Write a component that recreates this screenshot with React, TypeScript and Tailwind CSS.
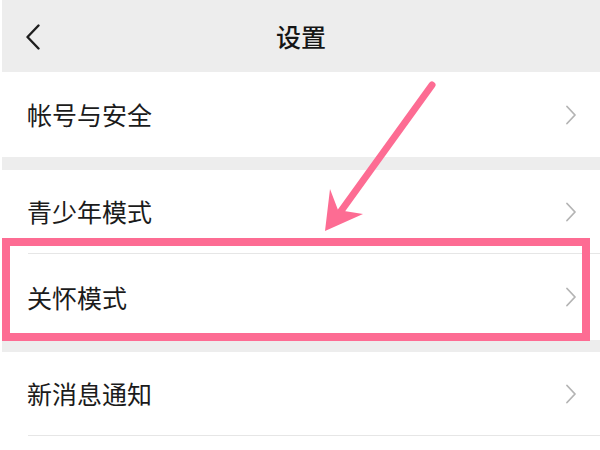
import React from "react";

const font = { fontFamily: '"Noto Sans CJK SC", "Noto Sans", sans-serif' };

function Chevron() {
  return (
    <svg width="12" height="20" viewBox="0 0 12 20" className="shrink-0">
      <path d="M2 1.5 L10 10 L2 18.5" fill="none" stroke="#b4b4b4" strokeWidth="1.8" strokeLinecap="round" strokeLinejoin="round" />
    </svg>
  );
}

function Row({ label, h }: { label: string; h: string }) {
  return (
    <div className={`flex items-center justify-between bg-white pl-[25px] pr-[23px] ${h}`}>
      <span className="text-[25px] leading-none text-[#1b1b1b]">{label}</span>
      <Chevron />
    </div>
  );
}

export default function App() {
  return (
    <div className="relative w-[600px] h-[450px] overflow-hidden bg-white pl-[2px]" style={font}>
      <div className="relative flex h-[72px] items-center justify-center bg-[#ededed]">
        <svg width="16" height="26" viewBox="0 0 16 26" className="absolute left-[23px] top-[24px]">
          <path d="M13.5 1.5 L2.5 13 L13.5 24.5" fill="none" stroke="#1e1e1e" strokeWidth="2.4" strokeLinecap="round" strokeLinejoin="round" />
        </svg>
        <span className="text-[25px] font-medium leading-none text-[#151515]">设置</span>
      </div>
      <Row label="帐号与安全" h="h-[85px]" />
      <div className="h-[13px] bg-[#ededed]" />
      <Row label="青少年模式" h="h-[83px]" />
      <div className="ml-[26px] h-px bg-[#e6e6e6]" />
      <Row label="关怀模式" h="h-[86px]" />
      <div className="h-[12px] bg-[#ededed]" />
      <Row label="新消息通知" h="h-[83px]" />
      <div className="ml-[26px] h-px bg-[#e6e6e6]" />

      <div className="absolute left-[2px] top-[238px] h-[103px] w-[588px] border-[8px] border-[#fd6c93]" />
      <svg width="600" height="450" viewBox="0 0 600 450" className="absolute left-0 top-0 pointer-events-none">
        <line x1="432" y1="85" x2="336" y2="218" stroke="#fd6c93" strokeWidth="7" strokeLinecap="round" />
        <path d="M325 231 L330 189 L338 210 L363 214 Z" fill="#fd6c93" />
      </svg>
    </div>
  );
}
